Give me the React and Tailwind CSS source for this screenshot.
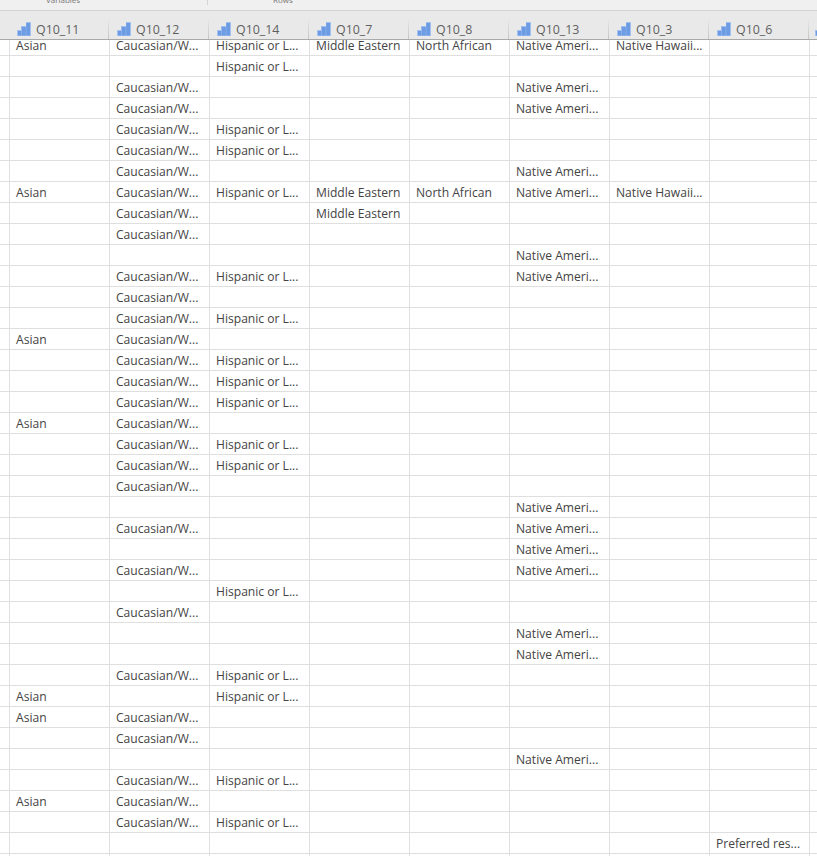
import React from 'react';

const COLUMNS = ['Q10_11', 'Q10_12', 'Q10_14', 'Q10_7', 'Q10_8', 'Q10_13', 'Q10_3', 'Q10_6'];

const LABELS = {
  A: 'Asian',
  C: 'Caucasian/W...',
  H: 'Hispanic or L...',
  M: 'Middle Eastern',
  N: 'North African',
  T: 'Native Ameri...',
  W: 'Native Hawaii...',
  P: 'Preferred res...'
};

// column index for each label
const SLOT = { A: 0, C: 1, H: 2, M: 3, N: 4, T: 5, W: 6, P: 7 };

const ROWS = [
  'ACHMNTW', 'H', 'CT', 'CT', 'CH', 'CH', 'CT', 'ACHMNTW', 'CM', 'C',
  'T', 'CHT', 'C', 'CH', 'AC', 'CH', 'CH', 'CH', 'AC', 'CH',
  'CH', 'C', 'T', 'CT', 'T', 'CT', 'H', 'C', 'T', 'T',
  'CH', 'AH', 'AC', 'C', 'T', 'CH', 'AC', 'CH', 'P'
];

function BarsIcon() {
  return (
    <svg width="14" height="14" viewBox="0 0 14 14" className="shrink-0">
      <path d="M0 14V8h4V4h5V0h5v14z" fill="#a4c1ee" />
      <rect x="1" y="9" width="3.4" height="4.5" fill="#6d9ce5" />
      <rect x="4.8" y="5" width="4" height="8.5" fill="#6d9ce5" />
      <rect x="9.2" y="1" width="3.8" height="12.5" fill="#6d9ce5" />
    </svg>
  );
}

function Row({ codes, first }) {
  const cells = Array(9).fill('');
  codes.split('').forEach(c => {
    cells[SLOT[c]] = LABELS[c];
  });
  return (
    <div className={`flex w-[900px] border-b border-[#dfdfdf] ${first ? 'h-[16px]' : 'h-[21px]'}`}>
      <div className="w-[10px] shrink-0 border-r border-[#dfdfdf]" />
      {cells.map((text, i) => (
        <div key={i} className="w-[100px] shrink-0 border-r border-[#dfdfdf] pl-[6px] flex items-end">
          <span className="text-[12.1px] leading-[18px] text-[#444] whitespace-nowrap">{text}</span>
        </div>
      ))}
    </div>
  );
}

export default function App() {
  return (
    <div className="w-[817px] h-[856px] overflow-hidden bg-white font-['Open_Sans','Noto_Sans',sans-serif]">
      {/* ribbon, mostly scrolled off */}
      <div className="h-[11px] bg-[#f0f0f0] border-b border-[#d4d4d4] overflow-hidden flex">
        <div className="w-[208px] h-[5px] border-r border-[#d4d4d4] pl-[46px]">
          <span className="block text-[8px] leading-[10px] -mt-[5px] text-[#777]">Variables</span>
        </div>
        <div className="pl-[65px]">
          <span className="block text-[8px] leading-[10px] -mt-[5px] text-[#777]">Rows</span>
        </div>
      </div>

      {/* column headers */}
      <div className="flex w-[900px] h-[29px] bg-[#e9e9e9] border-b border-[#a9a9a9]">
        <div className="w-[9px] shrink-0" />
        <div className="w-px h-[21px] self-end bg-gradient-to-b from-[#e9e9e9] to-[#c4c4c4]" />
        {COLUMNS.map(name => (
          <div key={name} className="w-[100px] shrink-0 flex">
            <div className="flex-1 pl-[8px] pt-[11px] flex items-start gap-[5px]">
              <BarsIcon />
              <span className="text-[12.4px] leading-[16px] text-[#5f5f5f]">{name}</span>
            </div>
            <div className="w-px h-[21px] self-end bg-gradient-to-b from-[#e9e9e9] to-[#c4c4c4]" />
          </div>
        ))}
        <div className="w-[100px] shrink-0 pl-[6px] pt-[11px]">
          <BarsIcon />
        </div>
      </div>

      {ROWS.map((codes, i) => (
        <Row key={i} codes={codes} first={i === 0} />
      ))}
      <Row codes="" />
    </div>
  );
}
